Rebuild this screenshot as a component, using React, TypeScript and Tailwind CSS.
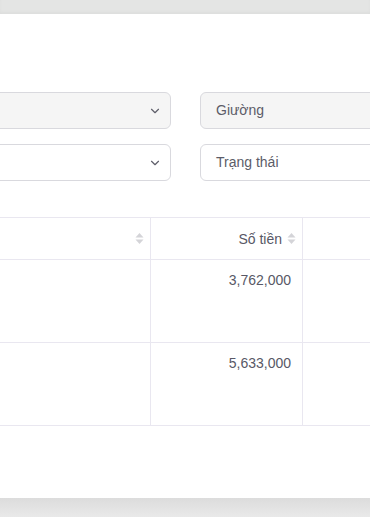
import { ChevronDown } from 'lucide-react';

const font = { fontFamily: '"Liberation Sans", Arial, sans-serif' };

function SortIcon() {
  return (
    <svg width="9" height="11" viewBox="0 0 9 11" className="shrink-0">
      <path d="M4.5 0 L8.5 4.5 L0.5 4.5 Z" fill="#d4d4d8" />
      <path d="M4.5 11 L8.5 6.5 L0.5 6.5 Z" fill="#d4d4d8" />
    </svg>
  );
}

function SelectBox({ disabled }: { disabled?: boolean }) {
  return (
    <div
      className={`h-[37px] rounded-[6px] border border-[#d9d9de] flex items-center justify-end pr-[8px] ${
        disabled ? 'bg-[#f5f5f5]' : 'bg-white'
      }`}
    >
      <ChevronDown className="w-[14px] h-[14px] text-[#5f5f6a]" strokeWidth={2} />
    </div>
  );
}

function InputBox({ placeholder, disabled }: { placeholder: string; disabled?: boolean }) {
  return (
    <div
      className={`h-[37px] rounded-[6px] border border-[#d9d9de] flex items-center pl-[15px] text-[14px] text-[#5c5c68] ${
        disabled ? 'bg-[#f5f5f5]' : 'bg-white'
      }`}
    >
      {placeholder}
    </div>
  );
}

const rows = ['3,762,000', '5,633,000'];

export default function App() {
  return (
    <div className="w-[370px] h-[517px] flex flex-col bg-[#e4e5e4] overflow-hidden" style={font}>
      <div className="h-[14px] bg-[#e4e5e4] shadow-[inset_0_-2px_3px_rgba(0,0,0,0.03)]" />

      <div className="h-[484px] bg-white overflow-hidden">
        {/* Bộ lọc */}
        <div className="mt-[78px] -ml-[130px] w-[630px] grid grid-cols-[301px_300px] gap-x-[29px] gap-y-[15px]">
          <SelectBox disabled />
          <InputBox placeholder="Giường" disabled />
          <SelectBox />
          <InputBox placeholder="Trạng thái" />
        </div>

        {/* Bảng */}
        <div className="mt-[36px] -ml-[151px] w-[700px] text-[14px] text-[#585866]">
          <div className="flex border-t border-b border-[#e9e7f0] h-[43px]">
            <div className="w-[302px] border-r border-[#e9e7f0] flex items-center justify-end pr-[6px]">
              <SortIcon />
            </div>
            <div className="w-[152px] border-r border-[#e9e7f0] flex items-center justify-end gap-[5px] pr-[6px] leading-[22px]">
              <span>Số tiền</span>
              <SortIcon />
            </div>
            <div className="flex-1" />
          </div>
          {rows.map((amount) => (
            <div key={amount} className="flex border-b border-[#e9e7f0] h-[83px]">
              <div className="w-[302px] border-r border-[#e9e7f0]" />
              <div className="w-[152px] border-r border-[#e9e7f0] text-right pr-[11px] pt-[9px] leading-[22px]">
                {amount}
              </div>
              <div className="flex-1" />
            </div>
          ))}
        </div>
      </div>

      <div className="h-[19px] bg-gradient-to-b from-[#dcdcdc] to-[#e9e9e9]" />
    </div>
  );
}
